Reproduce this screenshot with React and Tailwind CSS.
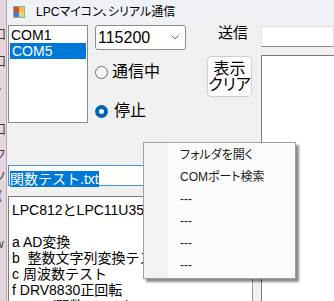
const FONT = "font-['Liberation_Sans','Noto_Sans_CJK_JP',sans-serif]";

function TitleIcon() {
    return (
        <svg width="12" height="12" viewBox="0 0 12 12">
            <rect x="0.5" y="0.5" width="11" height="11" fill="#f4f4f4" stroke="#9aa7b8" />
            <rect x="1" y="1" width="5" height="5" fill="#e0462a" />
            <rect x="6" y="1" width="5" height="5" fill="#f6c431" />
            <rect x="1" y="6" width="5" height="5" fill="#3b7fd6" />
            <rect x="6" y="6" width="5" height="5" fill="#e9d36a" />
        </svg>
    );
}

function Radio({ label, checked }) {
    return (
        <div className="flex items-center h-[20px]">
            {checked ? (
                <div className="w-[13px] h-[13px] rounded-full bg-[#0063b1] flex items-center justify-center">
                    <div className="w-[5px] h-[5px] rounded-full bg-white"></div>
                </div>
            ) : (
                <div className="w-[13px] h-[13px] rounded-full border border-[#6b6b6b] bg-[#f7f7f7]"></div>
            )}
            <span className={`text-[16px] leading-[20px] ${checked ? "ml-[6px]" : "ml-[4px]"}`}>{label}</span>
        </div>
    );
}

const menuItems = ["フォルダを開く", "COMポート検索", "---", "---", "---", "---"];

export default function App() {
    return (
        <div className={`relative w-[334px] h-[301px] overflow-hidden flex bg-[#f0f0f0] text-black ${FONT}`}>
            {/* background window strip */}
            <div className="relative w-[7px] h-full bg-[#e5d5dc] border-r border-[#b7a8ae] overflow-hidden text-[12px] text-[#3a3a3a]">
                <span className="absolute left-[-6px] top-[26px]">口</span>
                <span className="absolute left-[-6px] top-[53px]">口</span>
                <span className="absolute left-[-5px] top-[81px] text-[9px]">A</span>
                <span className="absolute left-[-6px] top-[121px]">口</span>
                <span className="absolute left-[-6px] top-[146px]">フ</span>
                <span className="absolute left-[-6px] top-[168px]">ソ</span>
                <span className="absolute left-[-2px] top-[186px]">(</span>
                <span className="absolute left-[-5px] top-[235px]">w</span>
            </div>

            {/* form window */}
            <div className="flex-1 flex flex-col">
                <div className="h-[23px] bg-[#eef2f7] flex items-center pt-[3px] pl-[6px]">
                    <TitleIcon />
                    <span className="ml-[11px] text-[12px] [font-feature-settings:'palt']">LPCマイコン、シリアル通信</span>
                </div>

                <div className="flex-1 flex bg-[#f0f0f0]">
                    {/* left part */}
                    <div className="w-[254px] flex flex-col">
                        <div className="flex pt-[4px] pl-[1px]">
                            <div className="w-[80px] h-[98px] bg-white border border-[#8a8a8a] pt-[1px] text-[14px] leading-[16px]">
                                <div className="h-[16px] pl-[2px]">COM1</div>
                                <div className="h-[16px] pl-[2px] mx-[1px] bg-[#0078d7] text-white">COM5</div>
                            </div>

                            <div className="ml-[7px] w-[91px] flex flex-col">
                                <div className="h-[25px] bg-white border border-[#8c8c8c] rounded-[3px] flex items-center justify-between pl-[2px] pr-[6px]">
                                    <span className="text-[16px] leading-[20px]">115200</span>
                                    <svg width="8" height="5" viewBox="0 0 8 5">
                                        <path d="M0.5 0.5 L4 4 L7.5 0.5" fill="none" stroke="#6a6a6a" strokeWidth="1" />
                                    </svg>
                                </div>
                                <div className="mt-[12px]">
                                    <Radio label="通信中" />
                                </div>
                                <div className="mt-[19px]">
                                    <Radio label="停止" checked />
                                </div>
                            </div>

                            <div className="ml-[21px] w-[45px] flex flex-col">
                                <div className="pl-[11px] text-[15px] leading-[16px]">送信</div>
                                <div className="mt-[15px] h-[41px] bg-[#fdfdfd] border border-[#cfcfcf] rounded-[4px] flex flex-col items-center justify-center text-[16px] leading-[16px] [font-feature-settings:'palt']">
                                    <span>表示</span>
                                    <span>クリア</span>
                                </div>
                            </div>
                        </div>

                        <div className="mt-[42px] ml-[1px] w-[245px] h-[21px] bg-white border border-[#4a90d9] pl-[1px] pt-[1px]">
                            <span className="inline-block h-[16px] leading-[16px] text-[14px] bg-[#0078d7] text-white">関数テスト.txt</span>
                        </div>

                        <div className="mt-[10px] ml-[1px] w-[245px] flex-1 bg-white border border-t-[#7a7a7a] border-l-[#7a7a7a] border-[#9a9a9a] pt-[5px] pl-[3px] text-[14px] leading-[16px] whitespace-pre overflow-hidden">
                            <div>LPC812とLPC11U35の関数テスト</div>
                            <div>&nbsp;</div>
                            <div>a AD変換</div>
                            <div>b  整数文字列変換テスト</div>
                            <div>c 周波数テスト</div>
                            <div>f DRV8830正回転</div>
                            <div>          (関数テスト)</div>
                        </div>
                    </div>

                    {/* right part */}
                    <div className="flex-1 flex flex-col pt-[5px]">
                        <div className="h-[21px] bg-white border border-[#e2e2e2] border-b-[#8a8a8a]"></div>
                        <div className="mt-[8px] flex-1 bg-white border border-[#7a7a7a] border-r-0 border-b-0"></div>
                    </div>
                </div>
            </div>

            {/* context menu */}
            <div className="absolute left-[143px] top-[142px] w-[153px] h-[137px] bg-[#fbfbfb] border border-[#a0a0a0] shadow-[3px_3px_2px_rgba(0,0,0,0.45)] flex">
                <div className="w-[24px] h-full bg-[#f3f3f3]"></div>
                <div className="flex-1 flex flex-col pt-[1px] pl-[12px] text-[12px] text-[#1a1a1a] [font-feature-settings:'palt']">
                    {menuItems.map((item, i) => (
                        <div key={i} className="h-[22px] flex items-center">{item}</div>
                    ))}
                </div>
            </div>
        </div>
    );
}
